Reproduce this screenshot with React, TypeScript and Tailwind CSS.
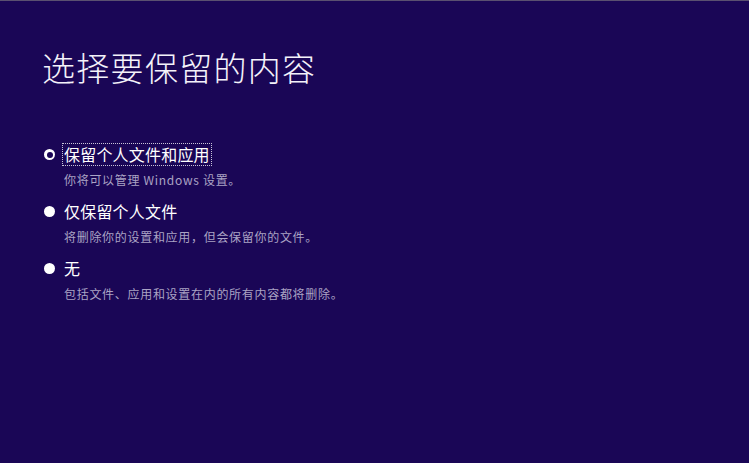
const options = [
  { label: '保留个人文件和应用', desc: '你将可以管理 Windows 设置。', selected: true },
  { label: '仅保留个人文件', desc: '将删除你的设置和应用，但会保留你的文件。', selected: false },
  { label: '无', desc: '包括文件、应用和设置在内的所有内容都将删除。', selected: false },
]

function Radio({ selected }: { selected: boolean }) {
  return selected ? (
    <span className="ml-[2px] flex h-[11px] w-[11px] shrink-0 items-center justify-center rounded-full bg-white">
      <span className="block h-[6px] w-[6px] rounded-full bg-[#1a0656]" />
    </span>
  ) : (
    <span className="ml-[2px] block h-[11px] w-[11px] shrink-0 rounded-full bg-white" />
  )
}

export default function App() {
  return (
    <div
      className="h-[463px] w-[749px] overflow-hidden border-t border-[#5a5070] bg-[#1a0656] pl-[42px] pt-[42px] text-white"
      style={{ fontFamily: '"Noto Sans CJK SC", "Noto Sans", sans-serif' }}
    >
      <h1 className="text-[33px] font-light leading-[48px] tracking-[1.3px] text-[#f4f2fa]">选择要保留的内容</h1>
      <div className="mt-[53px] flex flex-col gap-[12px]">
        {options.map((o) => (
          <div key={o.label} className="flex flex-col">
            <div className="flex items-center">
              <Radio selected={o.selected} />
              <span
                className={
                  'ml-[8px] px-[1px] text-[16px] leading-[21px] tracking-[0.2px] ' +
                  (o.selected ? 'outline outline-1 outline-dotted outline-[#c8c4d8]' : '')
                }
              >
                {o.label}
              </span>
            </div>
            <div className="mt-[5px] pl-[22px] text-[12px] leading-[19px] tracking-[0.7px] text-[#aaa3c4]">{o.desc}</div>
          </div>
        ))}
      </div>
    </div>
  )
}
